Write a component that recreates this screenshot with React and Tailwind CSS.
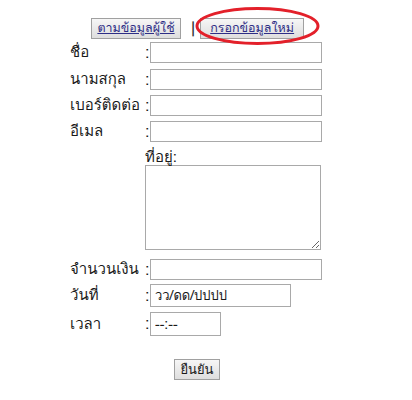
import React from 'react';

const FONT = "font-['Tahoma','Loma','Garuda','Noto_Sans_Thai','Noto_Sans','DejaVu_Sans',sans-serif]";

function Row({ label, children, className = '' }) {
  return (
    <div className={`flex items-center ${className}`}>
      <span className="w-[75px] shrink-0 whitespace-nowrap text-[15px] leading-none text-[#1a1a1a]">{label}</span>
      <span className="w-[5px] shrink-0 text-[16px] leading-none text-[#1a1a1a]">:</span>
      {children}
    </div>
  );
}

export default function App() {
  return (
    <div className={`w-[412px] h-[400px] bg-white ${FONT}`}>
      {/* ปุ่มเลือกโหมด */}
      <div className="relative flex items-center pt-[18px] pl-[91px] h-[38px]">
        <button className="w-[90px] h-[21px] border border-[#a0a0a0] bg-gradient-to-b from-[#f6f6f6] to-[#dedede] text-[12.5px] leading-none text-[#2e2e86] underline">
          ตามข้อมูลผู้ใช้
        </button>
        <span className="ml-[10px] text-[16px] leading-none text-[#333]">|</span>
        <button className="ml-[5px] w-[104px] h-[21px] border border-[#a0a0a0] bg-gradient-to-b from-[#f6f6f6] to-[#dedede] text-[12.5px] leading-none text-[#2e2e86] underline">
          กรอกข้อมูลใหม่
        </button>
        <svg className="absolute left-[195px] top-[6px]" width="125" height="40" viewBox="0 0 125 40">
          <ellipse cx="62.5" cy="20" rx="60.5" ry="17.5" fill="none" stroke="#e3202a" strokeWidth="3" />
        </svg>
      </div>

      {/* ฟอร์ม */}
      <div className="pl-[70px] pt-[4px]">
        <Row label="ชื่อ">
          <input className="w-[172px] h-[21px] border border-[#a9a9a9] bg-white" />
        </Row>
        <Row label="นามสกุล" className="mt-[6px]">
          <input className="w-[172px] h-[21px] border border-[#a9a9a9] bg-white" />
        </Row>
        <Row label="เบอร์ติดต่อ" className="mt-[5px]">
          <input className="w-[172px] h-[21px] border border-[#a9a9a9] bg-white" />
        </Row>
        <Row label="อีเมล" className="mt-[5px]">
          <input className="w-[172px] h-[21px] border border-[#a9a9a9] bg-white" />
        </Row>

        <div className="ml-[75px] h-[23px] flex items-end text-[15px] leading-none text-[#1a1a1a]">ที่อยู่:</div>
        <textarea className="ml-[75px] block w-[176px] h-[85px] border border-[#a9a9a9] bg-white" />

        <Row label="จำนวนเงิน" className="mt-[9px]">
          <input className="w-[172px] h-[21px] border border-[#a9a9a9] bg-white" />
        </Row>
        <Row label="วันที่" className="mt-[4px]">
          <input
            readOnly
            defaultValue="วว/ดด/ปปปป"
            className="w-[141px] h-[23px] border border-[#a9a9a9] bg-white px-[4px] text-[13px] text-[#1a1a1a]"
          />
        </Row>
        <Row label="เวลา" className="mt-[5px]">
          <input
            readOnly
            defaultValue="--:--"
            className="w-[71px] h-[24px] border border-[#a9a9a9] bg-white px-[4px] text-[14px] text-[#1a1a1a]"
          />
        </Row>
      </div>

      <div className="flex pl-[174px] mt-[23px]">
        <button className="w-[46px] h-[21px] border border-[#a0a0a0] bg-gradient-to-b from-[#f6f6f6] to-[#dedede] text-[13px] leading-none text-[#1a1a1a]">
          ยืนยัน
        </button>
      </div>
    </div>
  );
}
